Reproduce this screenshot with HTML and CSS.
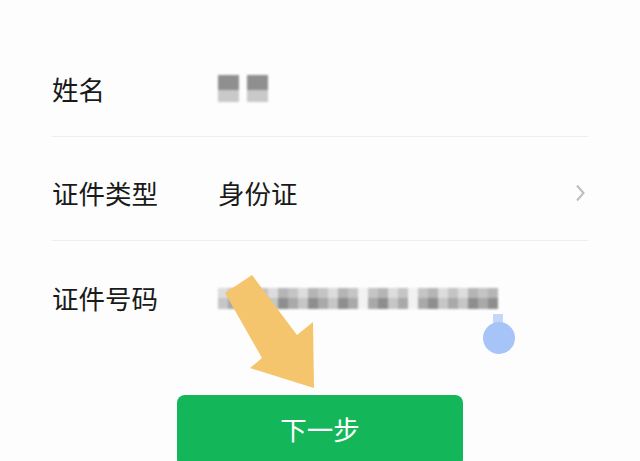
FILE: index.html
```html
<!DOCTYPE html>
<html lang="zh-CN">
<head>
  <meta charset="UTF-8" />
  <meta name="viewport" content="width=device-width, initial-scale=1.0" />
  <title>实名信息</title>
  <link rel="stylesheet" href="styles.css">
</head>
<body>
  <main class="page">
    <div class="form">
      <div class="row">
        <span class="label">姓名</span>
        <div class="value">
          <div class="mosaic name">
            <span class="cell dark"></span>
            <span class="gap"></span>
            <span class="cell dark"></span>
          </div>
        </div>
      </div>
      <div class="row">
        <span class="label">证件类型</span>
        <div class="value">身份证</div>
        <svg class="chevron" width="10" height="18" viewBox="0 0 10 18">
          <polyline points="2,1.5 8.5,9 2,16.5" fill="none" stroke="#bdbdbd" stroke-width="2" />
        </svg>
      </div>
      <div class="row last">
        <span class="label">证件号码</span>
        <div class="value">
          <div class="mosaic id">
            <span class="cell light"></span><span class="cell mid"></span><span class="cell light"></span><span class="cell dark"></span>
            <span class="cell mid"></span><span class="cell light"></span><span class="cell dark"></span><span class="cell mid"></span>
            <span class="cell light"></span><span class="cell dark"></span><span class="cell mid"></span><span class="cell light"></span>
            <span class="cell dark"></span><span class="cell mid"></span><span class="cell space"></span><span class="cell mid"></span>
            <span class="cell dark"></span><span class="cell light"></span><span class="cell mid"></span><span class="cell space"></span>
            <span class="cell mid"></span><span class="cell dark"></span><span class="cell light"></span><span class="cell mid"></span>
            <span class="cell light"></span><span class="cell dark"></span><span class="cell mid"></span><span class="cell dark"></span>
          </div>
        </div>
      </div>
    </div>

    <div class="actions">
      <button class="next-btn">下一步</button>
    </div>
  </main>

  <svg class="overlay" width="640" height="461" viewBox="0 0 640 461">
    <polygon points="252,275 297,335 313,322 314,388 250,368 262,358 225,293" fill="#f4c56c" />
    <rect x="493" y="314" width="10" height="11" fill="#c4d7f8" />
    <circle cx="499" cy="338" r="16" fill="#a6c4f7" />
  </svg>
</body>
</html>
```

FILE: styles.css
```css
* {
  box-sizing: border-box;
}

body {
  margin: 0;
  background-color: #fdfdfd;
  font-family: "Noto Sans CJK SC", "Noto Sans", sans-serif;
  color: #1a1a1a;
  height: 461px;
  overflow: hidden;
  position: relative;
}

.form {
  margin-top: 33px;
  padding: 0 52px;
}

.row {
  display: flex;
  align-items: center;
  height: 104px;
  padding-top: 8px;
  border-bottom: 1px solid #ededed;
  font-size: 26.5px;
}

.row.last {
  border-bottom: none;
}

.label {
  width: 166px;
  flex-shrink: 0;
}

.value {
  flex: 1;
}

.chevron {
  margin-right: 3px;
}

.mosaic {
  display: flex;
  filter: blur(0.8px);
}

.mosaic .cell {
  display: block;
  width: 10px;
  height: 21px;
}

.mosaic.name .cell {
  width: 21px;
  height: 27px;
  background: linear-gradient(#8f8f8f 55%, #c9c9c9 55%);
}

.mosaic.name .gap {
  width: 8px;
}

.mosaic.id {
  margin-top: 2px;
}

.cell.dark {
  background: linear-gradient(#b5b5b5 50%, #8e8e8e 50%);
}

.cell.mid {
  background: linear-gradient(#c4c4c4 50%, #a9a9a9 50%);
}

.cell.light {
  background: linear-gradient(#dcdcdc 50%, #c6c6c6 50%);
}

.cell.space {
  background: #f2f2f2;
}

.actions {
  display: flex;
  justify-content: center;
  margin-top: 50px;
}

.next-btn {
  width: 286px;
  height: 72px;
  border: none;
  border-radius: 8px;
  background-color: #14b65a;
  color: #ffffff;
  font-family: inherit;
  font-size: 26.5px;
  padding-bottom: 6px;
}

.overlay {
  position: absolute;
  left: 0;
  top: 0;
  pointer-events: none;
}
```
